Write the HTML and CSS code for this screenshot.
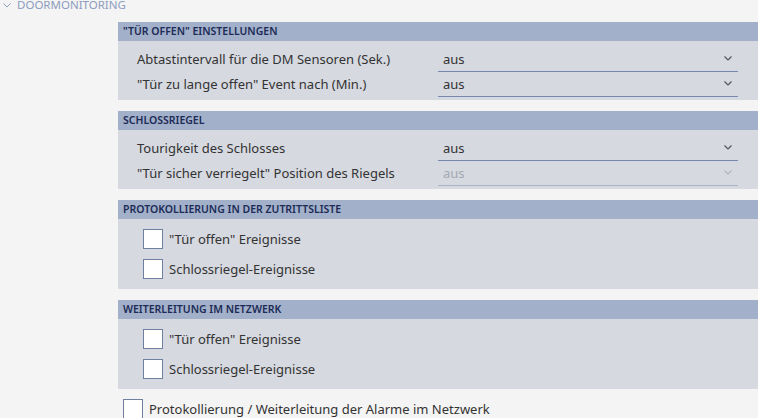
FILE: index.html
```html
<!DOCTYPE html>
<html lang="de">
<head>
<meta charset="utf-8">
<link rel="stylesheet" href="styles.css">
</head>
<body>
<div class="page">
  <div class="title">
    <svg class="title-chev" width="8" height="5" viewBox="0 0 8 5"><path d="M0.5 0.5 L4 4 L7.5 0.5" fill="none" stroke="#8d9cc0" stroke-width="1"/></svg>
    <span>DOORMONITORING</span>
  </div>
  <div class="content">
    <section class="group">
      <div class="group-head">"TÜR OFFEN" EINSTELLUNGEN</div>
      <div class="group-body fields">
        <div class="field">
          <span class="label">Abtastintervall für die DM Sensoren (Sek.)</span>
          <div class="select"><span>aus</span><svg class="chev" width="8" height="5" viewBox="0 0 8 5"><path d="M0.5 0.5 L4 4 L7.5 0.5" fill="none" stroke="currentColor" stroke-width="1.2"/></svg></div>
        </div>
        <div class="field">
          <span class="label">"Tür zu lange offen" Event nach (Min.)</span>
          <div class="select"><span>aus</span><svg class="chev" width="8" height="5" viewBox="0 0 8 5"><path d="M0.5 0.5 L4 4 L7.5 0.5" fill="none" stroke="currentColor" stroke-width="1.2"/></svg></div>
        </div>
      </div>
    </section>
    <section class="group">
      <div class="group-head">SCHLOSSRIEGEL</div>
      <div class="group-body fields">
        <div class="field">
          <span class="label">Tourigkeit des Schlosses</span>
          <div class="select"><span>aus</span><svg class="chev" width="8" height="5" viewBox="0 0 8 5"><path d="M0.5 0.5 L4 4 L7.5 0.5" fill="none" stroke="currentColor" stroke-width="1.2"/></svg></div>
        </div>
        <div class="field">
          <span class="label">"Tür sicher verriegelt" Position des Riegels</span>
          <div class="select disabled"><span>aus</span><svg class="chev" width="8" height="5" viewBox="0 0 8 5"><path d="M0.5 0.5 L4 4 L7.5 0.5" fill="none" stroke="currentColor" stroke-width="1.2"/></svg></div>
        </div>
      </div>
    </section>
    <section class="group">
      <div class="group-head">PROTOKOLLIERUNG IN DER ZUTRITTSLISTE</div>
      <div class="group-body checks">
        <label class="check"><span class="box"></span><span>"Tür offen" Ereignisse</span></label>
        <label class="check"><span class="box"></span><span>Schlossriegel-Ereignisse</span></label>
      </div>
    </section>
    <section class="group">
      <div class="group-head">WEITERLEITUNG IM NETZWERK</div>
      <div class="group-body checks">
        <label class="check"><span class="box"></span><span>"Tür offen" Ereignisse</span></label>
        <label class="check"><span class="box"></span><span>Schlossriegel-Ereignisse</span></label>
      </div>
    </section>
    <label class="check outer"><span class="box"></span><span>Protokollierung / Weiterleitung der Alarme im Netzwerk</span></label>
  </div>
</div>
</body>
</html>
```
FILE: styles.css
```css
html, body {
  margin: 0;
  padding: 0;
  background: #f4f4f4;
}
body {
  font-family: "Noto Sans", "Open Sans", sans-serif;
  color: #333;
  width: 758px;
  height: 418px;
  overflow: hidden;
}
.title {
  height: 22px;
  display: flex;
  align-items: flex-start;
  gap: 6px;
  color: #8d9cc0;
  font-size: 11.5px;
  line-height: 12px;
  padding-left: 3px;
}
.title span {
  margin-top: -1px;
}
.title-chev {
  margin-top: 3px;
}
.content {
  margin-left: 118px;
  display: flex;
  flex-direction: column;
  gap: 11px;
}
.group-head {
  height: 19px;
  background: #a2b0c9;
  color: #1c2b57;
  font-size: 10.5px;
  font-weight: 600;
  line-height: 19px;
  padding-left: 5px;
}
.group-body {
  background: #d6d9e0;
}
.fields {
  padding: 6px 20px 4px 19px;
  display: flex;
  flex-direction: column;
  gap: 1px;
}
.field {
  display: grid;
  grid-template-columns: 301px 1fr;
  height: 24px;
  align-items: stretch;
}
.label {
  font-size: 13px;
  line-height: 24px;
  color: #333;
}
.select {
  border-bottom: 1px solid #7688b0;
  display: flex;
  justify-content: space-between;
  align-items: flex-start;
  padding: 0 6px 0 5px;
  font-size: 13px;
  line-height: 24px;
  color: #333;
}
.select .chev {
  margin-top: 9px;
  color: #555;
}
.select.disabled {
  color: #a4a8b0;
  border-bottom-color: #a8b3c9;
}
.select.disabled .chev {
  color: #b0b4bb;
}
.checks {
  padding: 10px 0 10px 25px;
  display: flex;
  flex-direction: column;
  gap: 10px;
}
.check {
  display: flex;
  align-items: center;
  gap: 6px;
  height: 20px;
  font-size: 13px;
  color: #333;
}
.box {
  box-sizing: border-box;
  width: 20px;
  height: 20px;
  background: #fff;
  border: 1px solid #6f7f9f;
  flex: none;
}
.check.outer {
  margin-left: 5px;
  margin-top: -1px;
}
```
